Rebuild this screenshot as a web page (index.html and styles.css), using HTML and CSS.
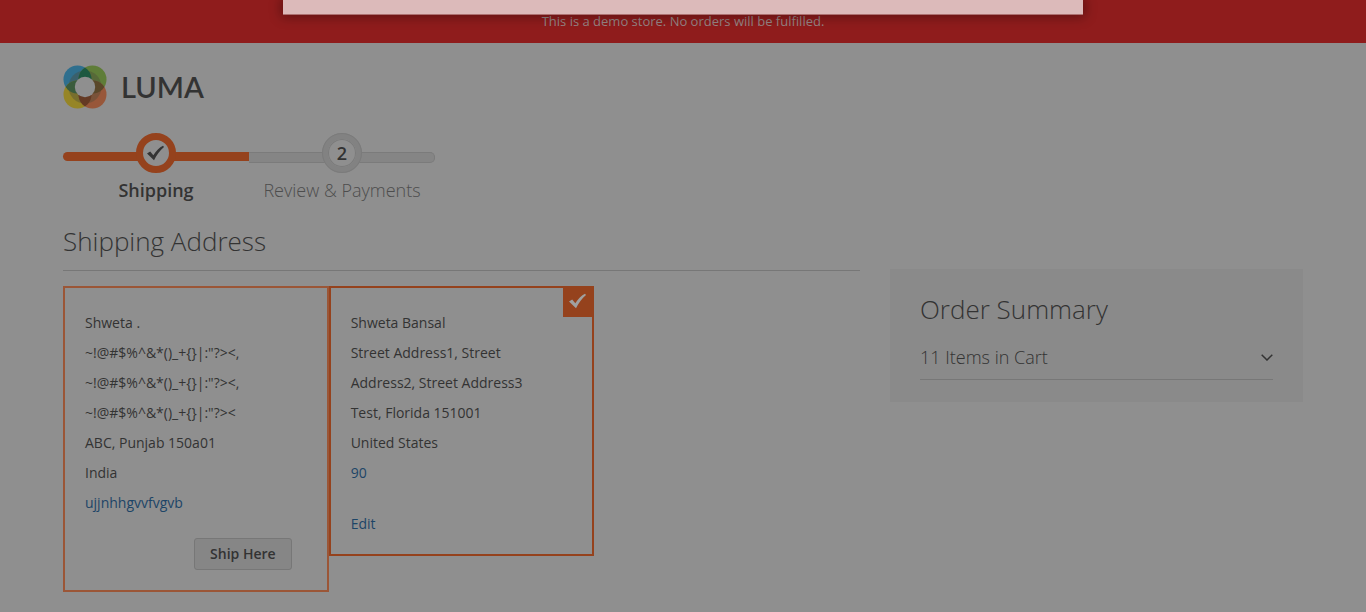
FILE: index.html
```html
<!DOCTYPE html>
<html lang="en">
<head>
<meta charset="utf-8">
<meta name="viewport" content="width=device-width, initial-scale=1">
<title>Checkout</title>
<link rel="stylesheet" href="styles.css">
</head>
<body>
<div class="demo-notice"><p>This is a demo store. No orders will be fulfilled.</p></div>
<div class="modal" role="dialog" aria-label="Dialog"></div>

<header class="header wrap">
  <a class="logo" href="#">
    <svg class="logo-mark" viewBox="0 0 44 44" aria-hidden="true">
      <defs>
        <clipPath id="tl"><circle cx="14.5" cy="14.5" r="14"/></clipPath>
        <clipPath id="tr"><circle cx="29.5" cy="14.5" r="14"/></clipPath>
        <clipPath id="bl"><circle cx="14.5" cy="29.5" r="14"/></clipPath>
      </defs>
      <circle cx="14.5" cy="14.5" r="14" fill="#2f6f8e"/>
      <circle cx="29.5" cy="14.5" r="14" fill="#5f7d38"/>
      <circle cx="14.5" cy="29.5" r="14" fill="#968526"/>
      <circle cx="29.5" cy="29.5" r="14" fill="#98573a"/>
      <circle cx="22" cy="22" r="16.500" fill="#4b4b3a" fill-opacity=".4"/>
      <circle cx="29.5" cy="14.5" r="14" fill="#1d5840" clip-path="url(#tl)"/>
      <circle cx="14.5" cy="29.5" r="14" fill="#3a5b3c" clip-path="url(#tl)"/>
      <circle cx="29.5" cy="29.5" r="14" fill="#5a4729" clip-path="url(#tr)"/>
      <circle cx="29.5" cy="29.5" r="14" fill="#643a24" clip-path="url(#bl)"/>
      <circle cx="22" cy="22" r="10.200" fill="#8f8f8f"/>
    </svg>
    <span class="logo-text">LUMA</span>
  </a>
</header>

<main class="wrap">
  <ol class="steps">
    <li class="step step-active">
      <span class="step-marker">
        <svg viewBox="0 0 18 16" aria-hidden="true"><path d="M0 8.500 3.200 6.500 6.300 10.200C9 6 12.500 2.500 16 .8L17 2C13 5.500 9.500 10 7 15.200Z"/></svg>
      </span>
      <span class="step-label">Shipping</span>
    </li>
    <li class="step">
      <span class="step-marker">2</span>
      <span class="step-label">Review &amp; Payments</span>
    </li>
  </ol>

  <div class="checkout">
    <section class="shipping">
      <h1 class="title section-title">Shipping Address</h1>
      <div class="addresses">
        <article class="address">
          <p>Shweta .<br>~!@#$%^&amp;*()_+{}|:"?&gt;&lt;,<br>~!@#$%^&amp;*()_+{}|:"?&gt;&lt;,<br>~!@#$%^&amp;*()_+{}|:"?&gt;&lt;<br>ABC, Punjab 150a01<br>India<br><a href="#">ujjnhhgvvfvgvb</a></p>
          <button class="ship-button" type="button">Ship Here</button>
        </article>
        <article class="address address-selected">
          <span class="selected-badge">
            <svg viewBox="0 0 18 16" aria-hidden="true"><path d="M0 8.500 3.200 6.500 6.300 10.200C9 6 12.500 2.500 16 .8L17 2C13 5.500 9.500 10 7 15.200Z"/></svg>
          </span>
          <p>Shweta Bansal<br>Street Address1, Street Address2, Street Address3<br>Test, Florida 151001<br>United States<br><a href="#">90</a></p>
          <a class="edit-link" href="#">Edit</a>
        </article>
      </div>
    </section>

    <aside class="summary">
      <h2 class="title">Order Summary</h2>
      <button class="cart-toggle" type="button" aria-expanded="false">
        <span>11 Items in Cart</span>
        <svg viewBox="0 0 12 7" aria-hidden="true"><path d="M.7.7 6 6 11.300.7"/></svg>
      </button>
    </aside>
  </div>
</main>
</body>
</html>
```
FILE: styles.css
```css
* { box-sizing: border-box; }

body {
  margin: 0;
  background: #8f8f8f;
  color: #333;
  font: 400 14px/20px "Open Sans", "Noto Sans", sans-serif;
}

p, h1, h2, ol { margin: 0; padding: 0; }

a { color: #1d4567; text-decoration: none; }

.wrap {
  max-width: 1280px;
  margin: 0 auto;
  padding: 0 20px;
}

.demo-notice {
  padding: 11px 20px 12px;
  background: #8f1c1c;
  color: #968484;
  font-size: 13px;
  font-weight: 500;
  text-align: center;
}

/* Dialog sliding in from above the window */
.modal {
  position: fixed;
  top: 0;
  left: 50%;
  width: 800px;
  max-width: 90%;
  height: 15px;
  transform: translateX(-50%);
  background: #dcbaba;
  border-bottom: 1px solid #ad7070;
  box-shadow: 0 0 12px 2px rgba(0, 0, 0, .35);
}

.header {
  display: flex;
  padding-top: 22px;
}

.logo {
  display: flex;
  align-items: center;
  gap: 14px;
  color: #333;
}

.logo-mark { width: 44px; height: 44px; }

.logo-text {
  font: 600 29px/42px Lato, sans-serif;
}

.steps {
  display: flex;
  margin: 24px 0 22px;
  list-style: none;
}

.step {
  position: relative;
  width: 186px;
  display: flex;
  flex-direction: column;
  align-items: center;
  gap: 5px;
  color: #4d4d4d;
  font-size: 18px;
  font-weight: 300;
  line-height: 24px;
  white-space: nowrap;
}

/* Progress bar behind the marker */
.step::before {
  content: "";
  position: absolute;
  top: 19px;
  left: 0;
  right: 0;
  height: 9px;
  background: #858585;
  border: 1px solid #7b7b7b;
  border-left: 0;
  border-radius: 0 5px 5px 0;
}

.step-marker {
  position: relative;
  display: grid;
  place-items: center;
  width: 40px;
  height: 40px;
  border-radius: 50%;
  border: 6px solid #828282;
  background: #8f8f8f;
  box-shadow: inset 0 0 0 1px #7b7b7b;
  outline: 1px solid #7b7b7b;
  outline-offset: -1px;
  color: #333;
  font-weight: 600;
}

.step-marker svg { width: 18px; height: 16px; fill: #333; }

.step-active { color: #333; font-weight: 600; }

.step-active::before {
  background: #95421d;
  border: 0;
  border-radius: 5px 0 0 5px;
}

.step-active .step-marker {
  border: 7px solid #95421d;
  box-shadow: none;
  outline: 0;
}

.checkout {
  display: grid;
  grid-template-columns: 797fr 413fr;
  gap: 30px;
  align-items: start;
}

.title {
  padding-bottom: 2px;
  font-size: 26px;
  font-weight: 300;
  line-height: 34px;
}

.section-title {
  padding-bottom: 12px;
  border-bottom: 1px solid #777;
}

.addresses {
  display: grid;
  grid-template-columns: repeat(3, 1fr);
  align-items: start;
  padding: 15px 0 20px;
}

.address {
  position: relative;
  display: flex;
  flex-direction: column;
  padding: 20px 35px 20px 20px;
  border: 2px solid #9b5637;
  line-height: 30px;
}

.address-selected { border-color: #95421d; }

.selected-badge {
  position: absolute;
  top: 0;
  right: 0;
  display: grid;
  place-items: center;
  width: 29px;
  height: 29px;
  background: #95421d;
}

.selected-badge svg {
  width: 18px;
  height: 16px;
  margin-bottom: 3px;
  fill: #a0a0a0;
}

.ship-button {
  align-self: flex-end;
  margin-top: 20px;
  padding: 5px 15px;
  border: 1px solid #777;
  border-radius: 3px;
  background: #868686;
  color: #333;
  font: 600 14px/20px "Open Sans", "Noto Sans", sans-serif;
}

.edit-link {
  align-self: flex-start;
  margin-top: 26px;
  line-height: 20px;
}

.summary {
  margin-top: 45px;
  padding: 23px 30px 22px;
  background: #8a8a8a;
}

.cart-toggle {
  display: flex;
  align-items: center;
  justify-content: space-between;
  width: 100%;
  margin-top: 17px;
  padding: 0 0 10px;
  border: 0;
  border-bottom: 1px solid #777;
  background: none;
  color: #333;
  font: 300 18px/24px "Open Sans", "Noto Sans", sans-serif;
}

.cart-toggle svg {
  width: 12px;
  height: 7px;
  fill: none;
  stroke: #333;
  stroke-width: 1.5;
}

@media (max-width: 900px) {
  .checkout { grid-template-columns: 1fr; }
  .addresses { grid-template-columns: repeat(auto-fill, minmax(240px, 1fr)); }
  .summary { margin-top: 0; }
}
```
